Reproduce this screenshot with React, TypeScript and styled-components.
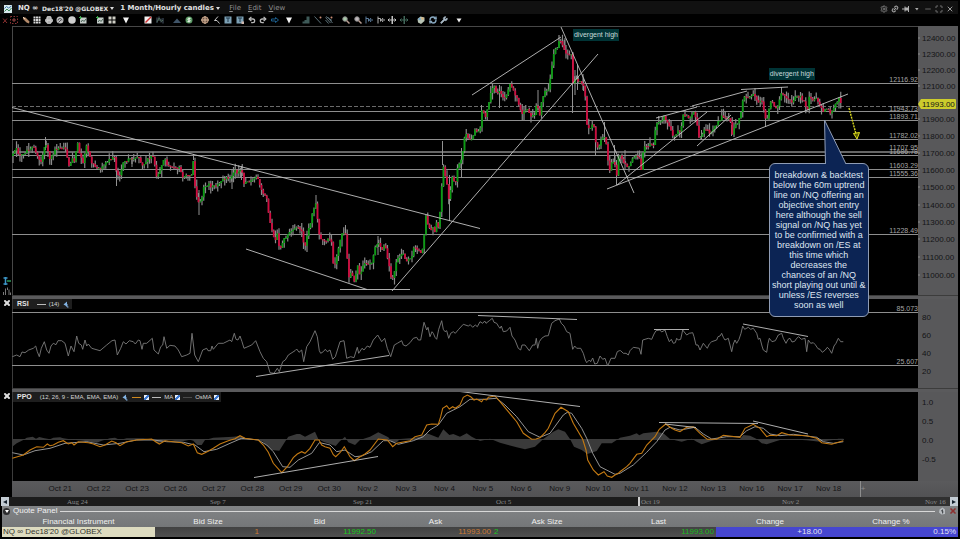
import React from "react";
import styled, { createGlobalStyle } from "styled-components";
import { Link2, Maximize, Minus, Printer, Redo2, RefreshCw, Search, Settings, Undo2, Wrench, X } from "lucide-react";

const sans = `"Liberation Sans", Arial, sans-serif`;
const wide = `"DejaVu Sans", Verdana, sans-serif`;
const serif = `"Liberation Serif", "Times New Roman", serif`;

const GlobalStyle = createGlobalStyle`
  * { box-sizing: border-box; }
  body { margin: 0; background: #000; }
  button, select, input { margin: 0; padding: 0; border: 0; background: none; color: inherit; font: inherit; }
  svg { display: block; }
`;

/* ---------- price data ---------- */

type Point = [number, number];

const scaled = (ox: number, oy: number, pairs: number[]): Point[] => {
  const out: Point[] = [];
  for (let i = 0; i < pairs.length; i += 2) out.push([ox + pairs[i] / 3, oy + pairs[i + 1] / 3]);
  return out;
};

/* Sections may run past the start of the next one; the later section wins. */
const chain = (...sections: Point[][]): Point[] =>
  sections.flatMap((section, i) => {
    const next = sections[i + 1];
    return next ? section.filter(([x]) => x < next[0][0]) : section;
  });

const price = chain(
  scaled(0, 0, [38,460,48,445,60,468,75,455,90,445,100,435,110,460,122,492,130,455,136,432,143,450,150,478,158,462,165,450,185,440,197,450,208,500,216,475,224,488,232,420,238,460,250,492,258,435,266,460,275,492,290,500,302,505,318,490,330,478,345,468,350,528,358,530,370,490,385,480,400,478,415,470,428,500,440,480,457,465,465,500,470,530,480,510,494,470,502,495,520,500,540,503,548,535,562,526,574,528,579,465]),
  scaled(0, 140, [583,125,590,175,597,190,604,180,610,145,625,130,635,142,650,135,665,120,680,115,692,118,705,90,715,100,724,85,732,128,745,128,757,122,770,112,780,135,790,165,802,178,808,240,818,280,826,300,834,275,838,335,848,305,862,285,875,272,892,262,905,270,914,325,922,285,932,245,945,190,950,200,955,270]),
  scaled(300, 140, [58,285,70,305,85,295,94,300,98,370,104,375,115,330,122,290,135,272,140,320,145,410,155,400,165,430,172,370,180,405,190,370,205,375,215,370,222,335,235,300,245,335,255,310,262,350,270,390,275,432,282,400,288,365,300,345,312,345,320,365,335,350,342,315,352,330,366,340,372,290,377,225,385,255,392,280,398,260,405,275,411,235,417,280,422,180,430,75,440,130,448,190,455,110,467,125,475,70,487,60]),
  scaled(300, 0, [490,415,500,405,512,425,525,392,540,395,546,330,558,350,570,290,582,255,590,280,600,270,612,300,620,285,630,255,640,270,650,295,665,340,680,325,692,350,704,345,711,300,718,360,727,290,740,270,748,265,752,225,760,160,772,140,780,115,790,145,804,165,815,160,819,250,828,235,838,245,850,255,856,290,862,390,872,380,880,365,888,435,895,450,906,410,914,415,922,450,927,525,937,480,945,490,950,525,957,460,965,475,975,495,985,500,995,480,1005,470,1018,475]),
  scaled(640, 0, [0,490,6,515,10,435,20,440,30,430,40,435,48,375,60,365,72,350,82,365,90,385,100,410,112,395,120,398,130,345,140,350,150,355,160,330,170,365,178,415,186,400,195,385,208,398,220,385,230,375,245,350,260,358,268,350,277,400,285,375,295,365,303,335,310,285,320,295,340,285,352,305,367,300,374,355,382,360,390,305,400,310,410,330,418,295,425,280,440,295,455,305,470,290,480,290,490,300,502,330,508,290,520,300,530,295,538,320,550,335,560,325,574,340,585,315,597,297,605,310,612,318]),
);

const joinAt = (pts: Point[], x: number) => {
  for (let i = 1; i < pts.length; i++) {
    const [x0, y0] = pts[i - 1];
    const [x1, y1] = pts[i];
    if (x <= x1) return x1 === x0 ? y1 : y0 + ((y1 - y0) * (x - x0)) / (x1 - x0);
  }
  return pts[pts.length - 1][1];
};

const noise = (i: number) => {
  const v = Math.sin(i * 127.1 + 11.7) * 43758.5453;
  return v - Math.floor(v);
};

const STEP = 1.75;
const candles = Array.from({ length: Math.floor(831 / STEP) }, (_, i) => {
  const x = 13 + i * STEP;
  const open = joinAt(price, x - STEP) + (noise(i) - 0.5) * 3;
  const close = joinAt(price, x) + (noise(i + 1) - 0.5) * 3;
  const top = Math.min(open, close);
  const bottom = Math.max(open, close);
  return {
    x,
    top,
    bottom,
    up: close < open,
    high: top - noise(i * 3 + 2) ** 2 * 7,
    low: bottom + noise(i * 5 + 4) ** 2 * 7,
  };
});

const bodies = (up: boolean) =>
  candles.filter((c) => c.up === up).map((c) => `M${c.x.toFixed(2)} ${c.top.toFixed(1)}V${Math.max(c.bottom, c.top + 1).toFixed(1)}`).join("");
const wicks = candles.map((c) => `M${c.x.toFixed(2)} ${c.high.toFixed(1)}V${c.low.toFixed(1)}`).join("");
const spikes = "M45.5 137V150M193.5 154V160M316 195V205M345.5 225V235M116.5 165V186M199 190V215M442.5 141V165M449.5 175V221M461.5 148V178M565 38V50M572.5 52V113M577.5 65V90M575 70V95M583 74V90M499.5 85V108M538 90V110M481.5 105V112M781.5 87V98M765.5 116V127M731.5 125V136M701.5 130V140M241.5 166V180M232 170V189M614.5 145V165M616.5 160V185M604.5 122V142M625 150V170M595.5 140V156M378 236V255M132 157V167";

const rsi = chain(
  scaled(0, 290, [37,200,50,195,60,200,66,186,75,188,86,180,100,175,107,168,112,185,118,200,124,175,133,155,140,180,147,190,153,168,160,160,168,164,174,152,185,152,195,160,205,198,213,168,222,185,230,138,236,160,244,165,248,178,255,150,260,168,265,162,275,175,300,182,320,165,336,152,345,150,352,195,362,175,370,155,378,162,388,152,400,155,406,162,415,150,420,152,426,178,430,160,440,160,457,145,462,180,475,192,482,170,488,165,492,140,500,175,510,166,525,168,535,180,545,200,560,195,570,190,576,130,584,195,595,215,608,180,620,175,624,182,632,182,636,168,640,178,655,160,670,160,690,150,695,155,703,130,708,148,714,150,720,138,726,155,732,175,755,165,767,152,780,185,790,205,800,215,810,248,822,250,832,235,838,245,848,215,856,210,865,195,885,182,890,177,897,187,905,180,911,215,920,170,930,155,945,122,952,140,958,182]),
  scaled(300, 290, [62,190,70,185,76,178,82,185,90,180,98,208,106,200,120,155,132,152,140,205,152,200,162,203,172,172,176,190,186,175,192,180,202,168,210,172,220,150,233,135,245,155,254,145,262,175,272,200,283,165,292,160,305,152,310,165,318,168,330,158,340,145,350,142,355,150,362,150,372,97,380,120,384,112,390,140,396,125,400,130,405,142,410,148,416,118,425,92,430,118,435,125,440,122,446,145,452,130,460,125,466,130,476,118,490,103,505,108,511,104,518,112,526,105,532,110,540,95,548,100,554,93,558,100,568,92,577,85,582,97,590,100,596,110,600,115,604,108,610,125,620,123,630,112,636,138,645,150,655,175,662,180,666,165,675,165,688,182,698,165,705,165,709,145,713,175,718,155,725,145,735,138,745,137,755,100,765,92,778,87,784,100,792,108,800,125,810,130,818,178,824,168,830,175,842,175,850,190,856,210,860,218,868,210,872,215,878,204,884,222,892,220,900,198,908,208,915,205,923,228,933,205,945,205,952,185,958,182]),
  scaled(620, 290, [2,182,10,190,18,190,25,195,30,182,40,172,58,175,63,193,68,150,85,145,95,148,102,132,108,122,120,120,125,126,135,120,142,140,148,155,154,148,160,160,166,158,170,145,175,150,182,148,188,120,200,135,208,130,218,128,222,140,228,165,234,165,240,180,250,160,262,175,268,162,275,155,290,150,294,140,300,138,305,130,310,142,315,150,325,145,335,185,340,162,345,150,350,160,357,148,363,130,368,108,374,118,385,112,392,118,400,115,410,130,415,148,420,145,426,168,430,180,440,187,444,160,448,145,456,155,466,152,475,135,485,130,490,145,498,160,504,148,510,145,516,156,524,154,530,145,536,140,544,148,555,145,560,185,565,150,572,160,580,158,586,164,594,176,600,178,607,187,616,180,622,172,628,178,635,190,642,168,648,160,655,145,662,155,670,155]),
);

const ppo = chain(
  scaled(0, 290, [37,505,70,495,90,480,110,470,130,472,142,462,150,467,160,465,175,457,190,452,205,462,215,458,222,465,235,455,265,458,280,462,300,470,315,465,335,453,348,458,360,467,380,455,410,450,455,447,468,456,478,462,495,452,520,455,545,458,565,468,580,462,592,488,605,493,620,486,640,475,660,462,685,452,705,446,720,437,735,445,775,450,790,465,805,487,820,520,845,548,862,530,880,503,892,492,905,485,915,490,930,475,945,450]),
  scaled(300, 290, [57,450,65,465,75,470,90,475,100,494,107,500,120,488,133,470,150,500,163,512,180,500,195,492,210,480,235,447,262,450,278,470,290,460,330,452,345,440,365,435,380,405,395,402,415,403,422,380,428,355,440,347,448,357,458,350,466,355,480,345,490,322,502,315,512,320,522,330,530,327,545,335,550,328,560,330,565,322,585,318,600,335,625,365,650,395,670,430,695,448,708,447,720,443,735,428,745,415,765,370,783,352,805,365,820,400,848,448,858,480,863,510,880,540,895,555,912,545,922,558,935,562,945,555,955,550]),
  scaled(620, 290, [0,545,20,530,30,520,50,493,65,490,80,465,105,440,118,418,137,402,155,415,165,420,180,425,200,412,220,410,240,430,262,448,290,448,310,436,360,442,375,415,400,403,420,415,440,440,450,436,470,437,485,428,510,435,560,437,590,445,605,458,635,463,655,457,670,452]),
);

const signal = chain(
  scaled(0, 290, [37,488,70,495,105,482,150,475,195,460,260,455,310,465,360,460,410,450,460,450,500,455,550,457,585,465,612,485,650,478,690,460,725,445,775,450,800,465,820,485,848,530,870,532,895,510,935,490,958,458]),
  scaled(300, 290, [60,458,90,465,110,485,135,480,165,500,185,498,215,485,250,452,270,452,295,463,340,452,370,440,390,420,415,405,440,370,480,350,510,328,550,328,590,325,615,345,650,380,685,425,720,442,750,430,770,402,790,375,802,367,815,370,845,415,860,445,878,490,900,530,945,553]),
  scaled(620, 290, [0,550,40,525,80,487,110,455,135,420,150,412,180,420,225,412,250,432,275,447,320,440,360,440,380,422,405,410,430,415,450,432,480,437,520,433,590,442,610,455,640,460,670,455]),
);

const histogram = chain(
  scaled(0, 290, [37,470,50,460,70,450,80,443,98,440,108,446,118,441,130,444,150,448,160,443,180,442,190,445,220,449,250,452,290,458,305,452,330,445,345,443,360,450,380,445,430,445,460,449,470,460,490,455,505,450,540,455,570,449,580,452,592,465,605,465,615,450,640,443,700,440,720,438,740,445,775,449,790,455,815,480,838,482,855,455,865,440,890,432]),
  scaled(300, 290, [0,432,15,440,45,425,55,447,70,455,90,462,107,468,118,455,135,440,145,457,165,465,180,450,210,440,235,427,265,442,275,455,290,457,300,447,340,444,360,440,380,430,400,437,415,443,430,418,448,435,460,432,480,440,500,430,515,440,540,453,570,446,600,458,650,472,675,478,705,470,730,447,760,425,775,418,795,425,810,447,822,470,845,480,862,492,890,483,905,460,935,460,950,450]),
  scaled(620, 290, [0,443,30,437,50,430,58,436,70,430,110,425,130,430,150,447,185,455,215,446,230,455,245,463,275,452,300,446,360,447,370,435,390,437,410,447,425,460,440,463,470,453,490,447,560,451,600,455,640,450,655,446,670,446]),
);

const line = (pts: Point[]) => pts.map(([x, y]) => `${x.toFixed(1)},${y.toFixed(1)}`).join(" ");

const levels: [string, number, number][] = [
  ["12116.92", 83.5, 82], ["11943.73", 111.5, 111], ["11893.71", 120.5, 119], ["11782.02", 139.5, 138],
  ["11707.95", 152, 150], ["11686.78", 155.5, 154], ["11603.29", 169.5, 168], ["11555.36", 177.5, 176], ["11228.49", 234.5, 233],
];
const priceTicks: [string, number][] = [
  ["12400.00", 38], ["12300.00", 54], ["12200.00", 70], ["12100.00", 86], ["11900.00", 119], ["11800.00", 136], ["11700.00", 153],
  ["11600.00", 170], ["11500.00", 187], ["11400.00", 205], ["11300.00", 222], ["11200.00", 239], ["11100.00", 257], ["11000.00", 275],
];
const days = ["Oct 21", "Oct 22", "Oct 23", "Oct 26", "Oct 27", "Oct 28", "Oct 29", "Oct 30", "Nov 2", "Nov 3", "Nov 4", "Nov 5", "Nov 6", "Nov 9", "Nov 10", "Nov 11", "Nov 12", "Nov 13", "Nov 16", "Nov 17", "Nov 18"];
const weeks = ["Aug 24", "Sep 7", "Sep 21", "Oct 5", "Oct 19", "Nov 2", "Nov 16"];

/* ---------- window chrome ---------- */

const Window = styled.main`
  display: flex;
  flex-direction: column;
  width: 100%;
  min-height: 100vh;
  padding-right: 2px;
  background: #000;
  color: #ddd;
  font-family: ${sans};
  font-size: 8px;
`;

const TitleBar = styled.header`
  display: flex;
  align-items: center;
  height: 14px;
  padding: 2px 4px 0 4px;
  background: #111;
  border-top: 1px solid #000;
  font: 7px/11px ${wide};
`;

const SymbolButton = styled.button`
  display: flex;
  align-items: center;
  gap: 4px;
  margin-left: 6px;
  color: #e2e2e2;
  font: bold 7px/11px ${wide};
`;

const Contract = styled.span`
  font-size: 6px;
`;

const Caret = styled.span`
  width: 0;
  height: 0;
  margin-left: -2px;
  border: 2px solid transparent;
  border-top: 3px solid #ddd;
  border-bottom: 0;
`;

const Period = styled.select`
  appearance: none;
  margin-left: 6px;
  padding-right: 4px;
  color: #e2e2e2;
  font: bold 7px/11px ${wide};
`;

const Menu = styled.nav`
  display: flex;
  gap: 7px;
  margin-left: 9px;
  color: #8f8f8f;
`;

const MenuButton = styled.button`
  &::first-letter { text-decoration: underline; }
`;

const WindowTools = styled.div`
  display: flex;
  align-items: center;
  gap: 3px;
  margin-left: auto;
  color: #8c8c8c;
`;

const IconButton = styled.button`
  display: grid;
  place-items: center;
  flex: none;
  width: 8px;
  height: 8px;
  svg { width: 8px; height: 8px; }
`;

const Toolbar = styled.div`
  display: flex;
  align-items: center;
  height: 12px;
  padding-left: 1px;
`;

const ToolGroup = styled.div<{ $width: number; $gap: number }>`
  display: flex;
  justify-content: space-between;
  width: ${(p) => p.$width}px;
  margin-left: ${(p) => p.$gap}px;
`;

const Pane = styled.section`
  display: grid;
  grid-template-columns: 12px 1fr;
`;

const Gutter = styled.div<{ $end?: boolean }>`
  display: flex;
  flex-direction: column;
  align-items: flex-end;
  justify-content: ${(p) => (p.$end ? "flex-end" : "flex-start")};
  gap: 2px;
  padding-right: 1px;
`;

const Plot = styled.div`
  position: relative;
  min-width: 0;
`;

const Chart = styled.svg`
  width: 100%;
  height: auto;
`;

const AxisText = styled.text`
  fill: #141416;
  font: 8px ${sans};
`;

const LevelText = styled.text`
  fill: #a6a6a6;
  font: 7px ${sans};
  text-anchor: end;
`;

const Divider = styled.div`
  height: 4px;
  margin-left: 12px;
  background: #5a5a5c;
  border-top: 1px solid #3c3c3c;
`;

const Legend = styled.div`
  position: absolute;
  top: 0;
  left: 1px;
  display: flex;
  align-items: center;
  height: 10px;
  padding: 0 2px 0 4px;
  gap: 3px;
  background: #1e1e1e;
  color: #d4d4d4;
  font: 6px/10px ${sans};
`;

const LegendTitle = styled.strong`
  margin-right: 5px;
  color: #e4e4e4;
  font-size: 7px;
`;

const Swatch = styled.span<{ $color: string }>`
  width: 9px;
  height: 1px;
  background: ${(p) => p.$color};
`;

const LegendItem = styled.label`
  display: flex;
  align-items: center;
  gap: 2px;
`;

const Tick = styled.input`
  appearance: none;
  width: 5px;
  height: 5px;
  background: #e8eef8;
  &:checked { background: linear-gradient(135deg, #e8eef8 35%, #3c78d0 36% 65%, #e8eef8 66%); }
`;

const Note = styled.div<{ $left: number; $top: number }>`
  position: absolute;
  left: ${(p) => p.$left}%;
  top: ${(p) => p.$top}%;
  padding: 0 1px;
  background: #003436;
  color: #c8dada;
  font: 7px/12px ${sans};
  white-space: nowrap;
`;

const Callout = styled.aside`
  position: absolute;
  z-index: 2;
  left: 80%;
  top: 51%;
  width: 100px;
  padding: 6px 0;
  border: 1px solid #8f9cb4;
  border-radius: 6px;
  background: #0c2454;
  color: #dfe6f2;
  font: 9px/10px ${sans};
  text-align: center;
  white-space: nowrap;
`;

const CalloutTail = styled.svg`
  position: absolute;
  left: 54px;
  bottom: 100%;
  width: 24px;
  height: 46px;
  margin-bottom: -1px;
`;

const Line = styled.span`
  display: block;
`;

const DayAxis = styled.div`
  display: flex;
  height: 16px;
  margin-left: 12px;
  padding-left: 29px;
  background: linear-gradient(#5a5a5c, #525254);
  color: #141416;
  font: 8px/16px ${sans};
`;

const Day = styled.span`
  flex: 1 1 0;
  text-align: center;
  white-space: nowrap;
`;

const AxisEnd = styled.span`
  flex: none;
  width: 110px;
  padding-left: 12px;
  color: #8d8d8d;
`;

const AxisMark = styled.span`
  display: block;
  height: 16px;
  border-left: 1px solid #8d8d8d;
`;

const Scroller = styled.div`
  display: grid;
  grid-template-columns: 8px 1fr 8px;
  height: 9px;
  padding-left: 1px;
  font: 7px/10px ${serif};
`;

const ScrollButton = styled.button<{ $left?: boolean }>`
  display: grid;
  place-items: center;
  background: #c3ccd4;
  &::before {
    content: "";
    border: 2px solid transparent;
    border-${(p) => (p.$left ? "right" : "left")}: 4px solid #14202c;
    border-${(p) => (p.$left ? "left" : "right")}: 0;
  }
`;

const ScrollTrack = styled.div`
  display: grid;
  grid-template-columns: 57fr repeat(6, 143fr) 26fr;
  overflow: hidden;
  background: #1c1c1c;
  color: #8a8a8a;
`;

const Week = styled.span<{ $selected: boolean; $first: boolean }>`
  padding-left: 1px;
  background: ${(p) => (p.$selected ? "#303030" : "#1c1c1c")};
  border-left: ${(p) => (p.$first ? "2px solid #d0d0d0" : "0")};
  white-space: nowrap;
`;

const QuotePanel = styled.section`
  margin-left: 2px;
  background: linear-gradient(#828486, #6e7072);
  border-bottom: 2px solid #000;
`;

const PanelHead = styled.div`
  display: flex;
  align-items: center;
  gap: 3px;
  height: 10px;
  padding: 0 1px;
  color: #f0f0f0;
  font: 8px/10px ${sans};
`;

const Rule = styled.span`
  flex: 1;
  height: 1px;
  background: #d8d8d8;
`;

const Disclosure = styled.button`
  display: grid;
  place-items: center;
  width: 7px;
  height: 7px;
  border-radius: 50%;
  background: #2c2c2e;
  &::before {
    content: "";
    border: 2px solid transparent;
    border-top: 3px solid #fff;
    border-bottom: 0;
  }
`;

const Quotes = styled.table`
  width: 100%;
  table-layout: fixed;
  border-collapse: collapse;
  font: 8px/10px ${sans};
`;

const Col = styled.col<{ $width: number }>`
  width: ${(p) => p.$width}px;
`;

const Th = styled.th`
  height: 11px;
  padding: 0;
  color: #f0f0f0;
  font-weight: normal;
  text-align: center;
`;

const Td = styled.td<{ $color: string; $bg?: string; $align?: string }>`
  height: 10px;
  padding: 0 2px 0 ${(p) => (p.$align === "left" ? 1 : 0)}px;
  background: ${(p) => p.$bg ?? "linear-gradient(#414141, #505050)"};
  color: ${(p) => p.$color};
  text-align: ${(p) => p.$align ?? "right"};
  white-space: nowrap;
`;

/* ---------- icons, drawn on a 16 unit grid ---------- */

const Glyph = ({ children }: { children: React.ReactNode }) => <svg viewBox="0 0 16 16" fill="none" strokeWidth="2">{children}</svg>;

const TriDown = () => <Glyph><path d="M2 3h12L8 15z" fill="#f4f4f4" /></Glyph>;
const RedX = () => <Glyph><path d="M4 5l8 9M12 5l-8 9" stroke="#8a3030" /></Glyph>;
const RedTarget = () => <Glyph><rect x="1" y="1" width="14" height="14" stroke="#8c3434" strokeDasharray="3 3" /><path d="M8 4v8M4 8h8" stroke="#9a4444" /></Glyph>;
const Pencil = () => <Glyph><path d="M2 2l5 1 8 8-1 4-5-2-7-7z" fill="#b48a6a" /><path d="M2 2l4 4" stroke="#e6d0b8" /></Glyph>;
const GridIcon = () => <Glyph><path d="M1 1h4v4H1zM6 1h4v4H6zM11 1h4v4h-4zM1 6h4v4H1zM6 6h4v4H6zM11 6h4v4h-4zM1 11h4v4H1zM6 11h4v4H6zM11 11h4v4h-4z" fill="#d8d8d8" /></Glyph>;
const Swirl = () => <Glyph><circle cx="8" cy="8" r="7" fill="#c0c0c0" /><path d="M4 9a4 4 0 118 0M5 13l5-5" stroke="#4b4b50" /></Glyph>;
const Disc = () => <Glyph><circle cx="8" cy="8" r="7.5" fill="#cfcfcf" /></Glyph>;
const SheetChart = () => <Glyph><rect x="2" y="3" width="13" height="12" fill="#c4ccc8" /><path d="M4 12l3-4 3 3 4-5" stroke="#476054" /><path d="M3 0v6M0 3h6" stroke="#3fa650" /></Glyph>;
const Panels = () => <Glyph><path d="M1 1h6v6H1zM9 1h6v6H9zM1 9h6v6H1zM9 9h6v6H9z" fill="#cfcfc6" /></Glyph>;
const RedPen = () => <Glyph><rect x="1" y="1" width="14" height="14" fill="#f0f0f0" /><path d="M3 13L14 2" stroke="#d03030" strokeWidth="3" /></Glyph>;
const Bars = () => <Glyph><path d="M2 3v11M6 1v9M10 5v8M14 4v11" stroke="#48586a" /><path d="M2 12l4-8 5 7 3-3" stroke="#4f6a58" /></Glyph>;
const Hill = () => <Glyph><path d="M0 14l8-9 8 9z" fill="#3f5468" /></Glyph>;
const Coin = () => <Glyph><circle cx="8" cy="8" r="7" fill="#5c9a66" /><path d="M11 5H7a1.500 1.500 0 000 3h2a1.500 1.500 0 010 3H5M8 3v10" stroke="#e4f0e4" /></Glyph>;
const Cross = () => <Glyph><circle cx="8" cy="8" r="6.500" fill="#6c5446" stroke="#c8a488" /><path d="M8 0v16M0 8h16" stroke="#d8b89c" /></Glyph>;
const Cursor = () => <Glyph><path d="M10 1L3 9h5l5 6" stroke="#c4c4c4" /></Glyph>;
const TextBox = ({ dot }: { dot?: boolean }) => <Glyph><rect x="1" y="1" width="14" height="14" fill="#7ca0b4" /><path d="M4 4h8M8 4v8" stroke="#20384a" />{dot && <path d="M11 11h5v5h-5z" fill="#d0b8b0" />}</Glyph>;
const BlueArrow = () => <Glyph><path d="M1 6h8V3l6 5-6 5v-3H1z" stroke="#1c6090" /></Glyph>;
const Steps = () => <Glyph><path d="M9 1h6v14H1v-4h4V8h4z" fill="#3e5a58" /></Glyph>;
const Stroke = ({ many }: { many?: boolean }) => <Glyph><path d={many ? "M1 3l10 11M5 2l10 12M1 8l6 7M2 1l12 8" : "M1 1l13 14"} stroke="#5c7078" /><circle cx="13" cy="3" r="2" fill="#c88c74" /></Glyph>;
const Lens = ({ color }: { color: string }) => <Glyph><circle cx="6" cy="6" r="4.500" fill={color} stroke="#8c8c8c" /><path d="M9 9l6 6" stroke="#b89c90" strokeWidth="3" /></Glyph>;
const Shift = ({ color }: { color: string }) => <Glyph><path d="M2 1v14M2 5h5v6M9 8h7M12 4L9 8l3 4" stroke={color} /></Glyph>;
const Spread = ({ color }: { color: string }) => <Glyph><path d="M7 0h3v16H7z" fill={color} /><path d="M0 8h16M3 5L0 8l3 3M13 5l3 3-3 3" stroke={color} /></Glyph>;
const Palette = () => <Glyph><path d="M1 6l6-5 8 2v7l-7 6-6-3z" fill="#b8c4b4" /><circle cx="5" cy="6" r="2.500" fill="#78a8c8" /><circle cx="11" cy="5" r="2.500" fill="#d8b480" /></Glyph>;
const Pin = () => <Glyph><path d="M0 8h6M6 3v10M13 2v12" stroke="#b0b0b0" /><path d="M6 5h7v6H6z" fill="#b0b0b0" /></Glyph>;
const ChartLogo = () => <svg viewBox="0 0 16 16" width="8" height="8"><rect width="16" height="16" fill="#d8e8ec" /><path d="M1 7l4-4 4 3 6-4" stroke="#3b78a8" strokeWidth="2" fill="none" /><path d="M1 13l5-5 4 4 5-6" stroke="#3a8a58" strokeWidth="2" fill="none" /></svg>;
const BluePointer = () => <Glyph><path d="M3 9l7-6v10z" fill="#84b4e4" /><path d="M10 8v6h3" stroke="#84b4e4" /></Glyph>;
const BlueSide = () => <Glyph><path d="M5 0v16M1 2h8M1 14h8" stroke="#3c96c8" strokeWidth="3" /><path d="M8 8h8" stroke="#2c9a58" strokeWidth="3" /></Glyph>;
const BarSide = () => <Glyph><path d="M1 10v6M5 3v13M9 1v5M12 5v11M15 11v5" stroke="#777" /></Glyph>;
const Camera = () => <Glyph><path d="M3 5l6-4 5 4v9l-7 1-5-4z" fill="#b8bcc0" /><path d="M6 7l5 3M9 5v8" stroke="#484c50" /></Glyph>;

type Tool = [string, React.ReactNode];
const toolGroups: { width: number; gap: number; tools: Tool[] }[] = [
  { width: 17, gap: 0, tools: [["Delete", <RedX />], ["Region", <RedTarget />]] },
  { width: 65, gap: 4, tools: [["Draw", <Pencil />], ["Grid", <GridIcon />], ["Print", <Printer color="#d0d0d0" fill="#aaa" strokeWidth={3} />], ["Refresh", <Swirl />], ["Record", <Disc />], ["Add chart", <SheetChart />]] },
  { width: 20, gap: 9, tools: [["New chart", <SheetChart />], ["Tile", <Panels />]] },
  { width: 8, gap: 6, tools: [["More layouts", <TriDown />]] },
  { width: 20, gap: 14, tools: [["Edit line", <RedPen />], ["Bar type", <Bars />]] },
  { width: 20, gap: 9, tools: [["Area", <Hill />], ["Trades", <Coin />]] },
  { width: 78, gap: 8, tools: [["Crosshair", <Cross />], ["Select", <Cursor />], ["Text", <TextBox />], ["Text note", <TextBox dot />], ["Undo", <Undo2 color="#b8b8b8" strokeWidth={4} />], ["Redo", <Redo2 color="#b8b8b8" strokeWidth={4} />], ["Arrow", <BlueArrow />]] },
  { width: 8, gap: 6, tools: [["More drawing tools", <TriDown />]] },
  { width: 31, gap: 9, tools: [["Steps", <Steps />], ["Trend line", <Stroke />], ["Channel", <Stroke many />]] },
  { width: 66, gap: 9, tools: [["Zoom in", <Lens color="#a8c8a8" />], ["Zoom out", <Lens color="#c0b8bc" />], ["Narrow", <Shift color="#5c7c9c" />], ["Shift", <Shift color="#b0b0b0" />], ["Expand", <Spread color="#c4c4c4" />], ["Compress", <Spread color="#42685a" />]] },
  { width: 31, gap: 9, tools: [["Colours", <Palette />], ["Reload", <RefreshCw color="#88a8c0" strokeWidth={4} />], ["Settings", <Wrench color="#a8b8c4" fill="#a8b8c4" strokeWidth={2} />]] },
  { width: 8, gap: 7, tools: [["More", <Glyph><path d="M3 5h10l-5 8z" fill="#eee" /></Glyph>]] },
];

const windowTools: Tool[] = [
  ["Options", <Settings color="#777" strokeWidth={3} />], ["Link", <Link2 color="#aaa" strokeWidth={3} transform="rotate(-45)" />], ["Pin", <Pin />],
  ["Pin menu", <Glyph><path d="M4 6h7l-3 5z" fill="#aaa" /></Glyph>], ["Minimize", <Minus color="#4a4a4a" strokeWidth={4} />],
  ["Maximize", <Maximize color="#777" strokeWidth={3} />], ["Close", <X color="#999" strokeWidth={3} />],
];

const calloutLines = [
  "breakdown & backtest", "below the 60m uptrend", "line on /NQ offering an", "objective short entry", "here although the sell", "signal on /NQ has yet",
  "to be confirmed with a", "breakdown on /ES at", "this time which", "decreases the", "chances of an /NQ", "short playing out until &", "unless /ES reverses", "soon as well",
];

/* ---------- chart panes ---------- */

const PriceChart = () => (
  <Chart viewBox="12 26 946 269" role="img" aria-label="NQ hourly candles">
    <path d="M12 26.500H918M12.500 26V295" stroke="#474747" />
    {levels.map(([label, y]) => <path key={label} d={`M12 ${y}H918`} stroke={y === 152 ? "#666" : "#8e8e8e"} strokeWidth={y === 152 ? 2 : 1} />)}
    <path d="M12 106.500H918" stroke="#6a6a6a" strokeDasharray="4 2" />
    <path d={wicks} stroke="#8a8a8a" strokeWidth="1.200" />
    <path d={spikes} stroke="#929292" strokeWidth="1" />
    <path d={bodies(true)} stroke="#0a9c12" strokeWidth="1.800" />
    <path d={bodies(false)} stroke="#d00a3e" strokeWidth="1.800" />
    <path
      d="M12 107.500L480 228.500M246 249L367 289.500M340 289.500H410M392 291L598 54M472 95L561 37M561 27L634 193M607 189L848 94M617 185L707 112M656 118L697 107M692 106L747 91M741 89.500L788 87M697 146L731 115"
      stroke="#c2c2c2"
      strokeWidth=".9"
      fill="none"
    />
    <path d="M849 108L856 134" stroke="#d8d820" strokeWidth="1.400" strokeDasharray="2 1" />
    <path d="M853.500 133.500L859.500 132.500L857 139Z" fill="#555500" stroke="#e0e020" />
    {levels.map(([label, , y]) => <LevelText key={label} x="918" y={y}>{label}</LevelText>)}
    <rect x="918" y="26" width="40" height="269" fill="#58585a" />
    {priceTicks.map(([label, y]) => (
      <g key={label}>
        <path d={`M918 ${y}h2`} stroke="#888" />
        <AxisText x="922" y={y + 3}>{label}</AxisText>
      </g>
    ))}
    <path d="M918 104l3-5h34q1 0 1 1v8q0 1-1 1h-34z" fill="#cccc2c" />
    <AxisText x="922" y="107">11993.00</AxisText>
  </Chart>
);

const RsiChart = () => (
  <Chart viewBox="12 299 946 89" role="img" aria-label="RSI">
    <path d="M12.500 299V388" stroke="#3c3c3c" />
    <path d="M12 312.500H918M12 365.500H918" stroke="#8e8e8e" />
    <polyline points={line(rsi)} fill="none" stroke="#7c7c7c" strokeWidth=".9" />
    <path d="M256 376.500L389 355.500M478 315.500L577 319.500M654 329.500H689M743 324L808 336.500" stroke="#c2c2c2" strokeWidth=".9" />
    <LevelText x="918" y="311">85.073</LevelText>
    <LevelText x="918" y="364">25.607</LevelText>
    <rect x="918" y="299" width="40" height="89" fill="#58585a" />
    {[["80", 317], ["60", 335], ["40", 353], ["20", 371]].map(([label, y]) => <AxisText key={label} x="922" y={Number(y) + 3}>{label}</AxisText>)}
  </Chart>
);

const PpoChart = () => (
  <Chart viewBox="12 392 946 89" role="img" aria-label="PPO">
    <path d="M12.500 392V481" stroke="#3c3c3c" />
    <path d="M12 439.500H844" stroke="#3c3c3c" />
    <polygon points={`12.300,439.700 ${line(histogram)} 843.300,439.700`} fill="#3a3a3a" />
    <polyline points={line(signal)} fill="none" stroke="#a4a4a4" strokeWidth=".9" />
    <polyline points={line(ppo)} fill="none" stroke="#c47a12" strokeWidth="1.100" />
    <path d="M254 477.500L378 456.500M460 391.500L580 406.500M659 422.500L758 423.500M665 424L696 427.500M753 421L808 434" stroke="#c2c2c2" strokeWidth=".9" />
    <rect x="918" y="392" width="40" height="89" fill="#58585a" />
    {[["1.0", 402], ["0.5", 421], ["0.0", 440], ["-0.5", 459]].map(([label, y]) => <AxisText key={label} x="922" y={Number(y) + 3}>{label}</AxisText>)}
  </Chart>
);

export default function App() {
  return (
    <Window>
      <GlobalStyle />
      <TitleBar>
        <ChartLogo />
        <SymbolButton aria-haspopup="menu">NQ ∞ <Contract>Dec18'20 @GLOBEX</Contract><Caret /></SymbolButton>
        <Period aria-label="Period and bar size" defaultValue="1m">
          <option value="1m">1 Month/Hourly candles</option>
        </Period>
        <Caret />
        <Menu>
          <MenuButton>File</MenuButton>
          <MenuButton>Edit</MenuButton>
          <MenuButton>View</MenuButton>
        </Menu>
        <WindowTools>
          {windowTools.map(([name, icon]) => <IconButton key={name} aria-label={name}>{icon}</IconButton>)}
        </WindowTools>
      </TitleBar>

      <Toolbar role="toolbar">
        {toolGroups.map((g, i) => (
          <ToolGroup key={i} $width={g.width} $gap={g.gap}>
            {g.tools.map(([name, icon]) => <IconButton key={name} aria-label={name}>{icon}</IconButton>)}
          </ToolGroup>
        ))}
      </Toolbar>

      <Pane>
        <Gutter $end>
          <IconButton aria-label="Sidebar"><BlueSide /></IconButton>
          <IconButton aria-label="Studies"><BarSide /></IconButton>
        </Gutter>
        <Plot>
          <PriceChart />
          <Note $left={59.3} $top={1}>divergent high</Note>
          <Note $left={80} $top={15.5}>divergent high</Note>
          <Callout>
            <CalloutTail viewBox="0 0 24 46">
              <path d="M1 45L0.500 1L22 45V46H1Z" fill="#0c2454" />
              <path d="M1.500 45L0.500 1L22 45" fill="none" stroke="#8f9cb4" />
            </CalloutTail>
            {calloutLines.map((text) => <Line key={text}>{text}</Line>)}
          </Callout>
        </Plot>
      </Pane>
      <Divider />

      <Pane>
        <Gutter>
          <IconButton aria-label="Close RSI"><X color="#ddd" strokeWidth={6} /></IconButton>
        </Gutter>
        <Plot>
          <RsiChart />
          <Legend>
            <LegendTitle>RSI</LegendTitle>
            <Swatch $color="#bbb" />(14)
            <IconButton aria-label="Edit RSI"><BluePointer /></IconButton>
          </Legend>
        </Plot>
      </Pane>
      <Divider />

      <Pane>
        <Gutter>
          <IconButton aria-label="Close PPO"><X color="#ddd" strokeWidth={6} /></IconButton>
        </Gutter>
        <Plot>
          <PpoChart />
          <Legend>
            <LegendTitle>PPO</LegendTitle>
            (12, 26, 9 - EMA, EMA, EMA)
            <IconButton aria-label="Edit PPO"><BluePointer /></IconButton>
            <Swatch $color="#d08a20" />
            <LegendItem><Tick type="checkbox" defaultChecked aria-label="PPO line" /></LegendItem>
            <Swatch $color="#bbb" />
            <LegendItem>MA<Tick type="checkbox" defaultChecked /></LegendItem>
            <Swatch $color="#4a4a4a" />
            <LegendItem>OsMA<Tick type="checkbox" defaultChecked /></LegendItem>
          </Legend>
        </Plot>
      </Pane>

      <DayAxis>
        {days.map((d) => <Day key={d}>{d}</Day>)}
        <AxisEnd><AxisMark>+</AxisMark></AxisEnd>
      </DayAxis>

      <Scroller>
        <ScrollButton $left aria-label="Scroll back" />
        <ScrollTrack>
          <span />
          {weeks.map((w, i) => <Week key={w} $selected={i > 3} $first={i === 4}>{w}</Week>)}
        </ScrollTrack>
        <ScrollButton aria-label="Scroll forward" />
      </Scroller>

      <QuotePanel>
        <PanelHead>
          <Disclosure aria-label="Collapse quote panel" />
          Quote Panel
          <Rule />
          <IconButton aria-label="Configure"><Camera /></IconButton>
          <IconButton aria-label="Close quote panel"><X color="#8c3030" strokeWidth={5} /></IconButton>
        </PanelHead>
        <Quotes>
          <colgroup>
            {[153, 106, 117, 115, 108, 115, 108, 134].map((w, i) => <Col key={i} $width={w} />)}
          </colgroup>
          <thead>
            <tr>{["Financial Instrument", "Bid Size", "Bid", "Ask", "Ask Size", "Last", "Change", "Change %"].map((h) => <Th key={h}>{h}</Th>)}</tr>
          </thead>
          <tbody>
            <tr>
              <Td $color="#34342c" $bg="#dddbc0" $align="left">NQ ∞ Dec18'20 @GLOBEX</Td>
              <Td $color="#cc7a34">1</Td>
              <Td $color="#18c81c">11992.50</Td>
              <Td $color="#cc7a34">11993.00</Td>
              <Td $color="#18c81c" $align="left">2</Td>
              <Td $color="#18b81c">11993.00</Td>
              <Td $color="#e4e4f4" $bg="#4646d0">+18.00</Td>
              <Td $color="#e4e4f4" $bg="#4646d0">0.15%</Td>
            </tr>
          </tbody>
        </Quotes>
      </QuotePanel>
    </Window>
  );
}
